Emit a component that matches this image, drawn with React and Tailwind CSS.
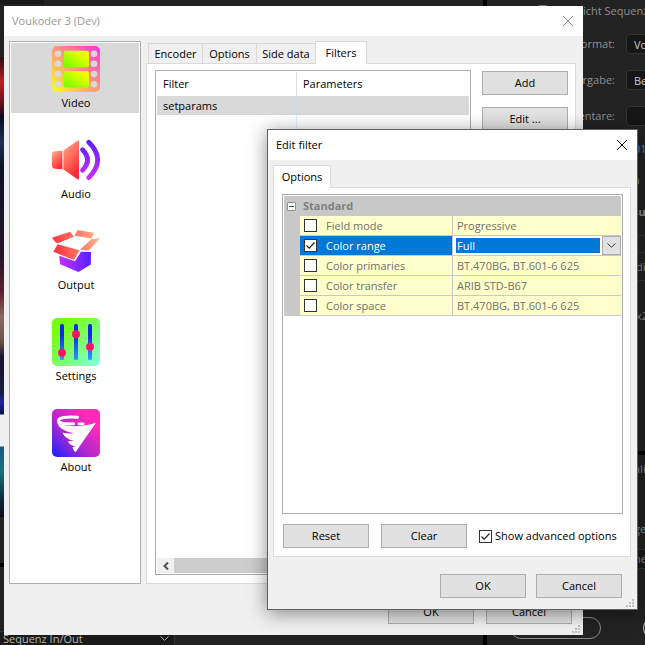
import { useState } from 'react';

const pages = [
  { name: 'Video', Icon: VideoIcon },
  { name: 'Audio', Icon: AudioIcon },
  { name: 'Output', Icon: OutputIcon },
  { name: 'Settings', Icon: SettingsIcon },
  { name: 'About', Icon: AboutIcon },
];

const filterProps = [
  { id: 'field_mode', label: 'Field mode', value: 'Progressive' },
  { id: 'range', label: 'Color range', value: 'Full' },
  { id: 'primaries', label: 'Color primaries', value: 'BT.470BG, BT.601-6 625' },
  { id: 'trc', label: 'Color transfer', value: 'ARIB STD-B67' },
  { id: 'space', label: 'Color space', value: 'BT.470BG, BT.601-6 625' },
];

function VideoIcon() {
  return (
    <svg viewBox="0 -1 48 48" className="size-12">
      <defs>
        <linearGradient id="film" x1="0" y1="1" x2="1" y2="0">
          <stop offset="0" stopColor="#f6ff1e" />
          <stop offset="0.5" stopColor="#ff9a76" />
          <stop offset="1" stopColor="#ff2ee6" />
        </linearGradient>
        <linearGradient id="frame" x1="0" y1="1" x2="1" y2="0">
          <stop offset="0" stopColor="#6dff00" />
          <stop offset="0.8" stopColor="#f0ff00" />
        </linearGradient>
      </defs>
      <rect width="48" height="46" rx="5" fill="url(#film)" />
      {[7.7, 17.7, 28, 38.3].map((y) => (
        <g key={y} fill="#d9d9d9">
          <circle cx="6" cy={y} r="3.3" />
          <circle cx="42" cy={y} r="3.3" />
        </g>
      ))}
      <rect x="11.7" y="4.7" width="25.3" height="16.5" rx="2" fill="url(#frame)" />
      <rect x="11.7" y="25" width="25.3" height="16.5" rx="2" fill="url(#frame)" />
    </svg>
  );
}

function AudioIcon() {
  return (
    <svg viewBox="0 -1 48 48" className="size-12">
      <defs>
        <linearGradient id="horn" x1="0" y1="0" x2="0.5" y2="1">
          <stop offset="0" stopColor="#ffb28a" />
          <stop offset="1" stopColor="#ff2a36" />
        </linearGradient>
        <linearGradient id="wave" gradientUnits="userSpaceOnUse" x1="0" y1="4" x2="0" y2="42">
          <stop offset="0" stopColor="#5a1fff" />
          <stop offset="1" stopColor="#cc30ff" />
        </linearGradient>
      </defs>
      <path d="M3 14.3 L10.4 13.8 V32.2 L3 31.7 Q0 31.4 0 28.5 V17.5 Q0 14.6 3 14.3Z" fill="url(#horn)" />
      <path d="M11.4 13.5 L25.5 3.8 Q27 3 27 4.8 V41.2 Q27 43 25.5 42.2 L11.4 32.5Z" fill="url(#horn)" />
      <path d="M30.5 12.8 Q40.5 23 30.5 33.2" fill="none" stroke="url(#wave)" strokeWidth="4.8" strokeLinecap="round" />
      <path d="M36.8 5.2 Q54.5 22.8 36.8 40.6" fill="none" stroke="url(#wave)" strokeWidth="4.8" strokeLinecap="round" />
    </svg>
  );
}

function OutputIcon() {
  return (
    <svg viewBox="0 -1 48 48" className="size-12">
      <defs>
        <linearGradient id="flap" gradientUnits="userSpaceOnUse" x1="0" y1="20" x2="46" y2="10">
          <stop offset="0" stopColor="#ff2c3a" />
          <stop offset="1" stopColor="#ffb28c" />
        </linearGradient>
        <linearGradient id="box" x1="0" y1="0" x2="1" y2="0">
          <stop offset="0" stopColor="#c431ff" />
          <stop offset="1" stopColor="#5620ff" />
        </linearGradient>
      </defs>
      <path d="M0 9.7 L18 3.7 L22 8.5 L6 15.2 L3.5 14.2Z" fill="url(#flap)" />
      <path d="M25.5 2 L42 4.7 L39.6 10.6 L22.5 7.8Z" fill="url(#flap)" />
      <path d="M39.7 10.9 L48 10.3 L36.5 22.7 L28 21.5Z" fill="url(#flap)" />
      <path d="M5.7 16.2 L27.6 22.3 L22 32 L1.3 23.8Z" fill="url(#flap)" />
      <path d="M7.2 27.7 L23 33.2 L29 23.8 L39 24 L38.8 36.5 L26.5 44 L8 36.3Z" fill="url(#box)" />
    </svg>
  );
}

function SettingsIcon() {
  return (
    <svg viewBox="0 0 48 48" className="size-12">
      <defs>
        <linearGradient id="board" x1="0" y1="0" x2="1" y2="1">
          <stop offset="0.2" stopColor="#77ff10" />
          <stop offset="1" stopColor="#86ffe4" />
        </linearGradient>
        <linearGradient id="slot" x1="0" y1="0" x2="0" y2="1">
          <stop offset="0.3" stopColor="#0a2be0" />
          <stop offset="1" stopColor="#2e9bff" />
        </linearGradient>
      </defs>
      <rect width="48" height="48" rx="5" fill="url(#board)" />
      {[[10, 34.8], [24, 16.2], [38, 28.7]].map(([x, y]) => (
        <g key={x}>
          <rect x={x - 2} y="6" width="4" height="36" rx="1.5" fill="url(#slot)" />
          <circle cx={x} cy={y} r="4" fill="#ff1266" />
        </g>
      ))}
    </svg>
  );
}

function AboutIcon() {
  return (
    <svg viewBox="0 0 48 48" className="size-12">
      <defs>
        <linearGradient id="sky" x1="0" y1="1" x2="0.8" y2="0.2">
          <stop offset="0" stopColor="#1722ff" />
          <stop offset="0.5" stopColor="#b026cf" />
          <stop offset="1" stopColor="#ff2bb6" />
        </linearGradient>
      </defs>
      <rect width="48" height="48" rx="5" fill="url(#sky)" />
      <path d="M25.5 8.3 C14 7 6.5 9 6.5 11.5 C6.5 14.5 14 15.3 21.5 14.8" fill="none" stroke="#fff" strokeWidth="3" strokeLinecap="round" />
      <path d="M27 14.8 H31" stroke="#fff" strokeWidth="2.8" strokeLinecap="round" />
      <path
        d="M5 12.5 C9 18.5 30 18.5 44 13.7 L23.5 43.3 C22 42 21 40.5 20.5 38.3 L24 37.6 C20 37 17 35 16 32.2 L22.5 32 C17 31 12 27.5 10.5 23.4 Q15 25 22 24.3 C12 22 6 19 5 12.5Z"
        fill="#fff"
      />
    </svg>
  );
}

function CloseButton({ className }) {
  return (
    <button aria-label="Close" className={className}>
      <svg viewBox="0 0 12 12" className="size-3" fill="none" stroke="currentColor">
        <path d="M1 1 L11 11 M11 1 L1 11" />
      </svg>
    </button>
  );
}

function PushButton({ children }) {
  return (
    <button className="h-6 w-[86px] shrink-0 border border-[#adadad] bg-[#e1e1e1] text-center">{children}</button>
  );
}

function CheckBox({ id, checked, onChange }) {
  return (
    <span className="relative block size-[13px] shrink-0">
      <input
        id={id}
        type="checkbox"
        checked={checked}
        onChange={onChange}
        className="peer block size-[13px] appearance-none border border-[#333] bg-white"
      />
      <svg viewBox="0 0 13 13" className="pointer-events-none absolute inset-0 hidden peer-checked:block" fill="none" stroke="#222" strokeWidth="1.2">
        <path d="M2.5 6.5 L5.2 9.2 L10.5 3.5" />
      </svg>
    </span>
  );
}

function SizeGrip() {
  return (
    <svg viewBox="0 0 9 9" className="absolute right-[2px] bottom-[1px] size-[9px]" fill="#bfbfbf">
      <path d="M6 0h2v2h-2z M3 3h2v2h-2z M6 3h2v2h-2z M0 6h2v2h-2z M3 6h2v2h-2z M6 6h2v2h-2z" />
    </svg>
  );
}

// Export dialog of the host application, mostly hidden by the two windows
function HostApp() {
  return (
    <div className="flex min-h-screen bg-[#222] text-[#8f8f8f]">
      <div className="flex w-[483px] shrink-0 flex-col">
        <div className="h-[57px] bg-[#222]">
          <div className="h-1 w-11 bg-[#191919]" />
        </div>
        <div className="h-[460px] w-1 bg-[linear-gradient(#2a0a12,#c01f24_25px,#5a1018_48px,#0a0a20_60px,#1c3054_85px,#0d1226_110px,#241428_200px,#5a2030_235px,#8a6a60_260px,#6a5048_285px,#141430_300px,#1a1a3a_335px,#1c24a8_345px,#10104a_357px,#f0f0f0_358px,#f0f0f0_389px,#1a5a80_390px,#17707c_415px,#0d3040_440px,#120a18)]" />
        <div className="mt-[46px] h-1 bg-black" />
        <div className="mt-auto flex h-[14px] items-center border-t border-[#333] bg-[#1a1a1a] pl-[3px] text-[#b4b4b4]">
          <span className="w-[157px]">Sequenz In/Out</span>
          <svg viewBox="0 0 9 5" className="mr-[5px] h-[5px] w-[9px]" fill="none" stroke="currentColor">
            <path d="M0.5 0.5 L4.5 4.2 L8.5 0.5" />
          </svg>
          <div className="h-full flex-1 border-l border-[#333] bg-[#222]" />
        </div>
      </div>
      <div className="w-1 shrink-0 bg-black" />
      <div className="flex min-w-0 flex-1 flex-col overflow-hidden whitespace-nowrap">
        <div className="flex h-[26px] items-center gap-2 pb-1 pl-[49px]">
          <input type="checkbox" aria-label="Entspricht Sequenzeinstellungen" className="size-[13px] shrink-0 appearance-none rounded-sm border border-[#777]" />
          <span className="pl-[26px]">icht Sequenz</span>
        </div>
        <HostRow label="Format:" value="Voukoder" />
        <HostRow label="Vorgabe:" value="Benutzer" />
        <HostRow label="Kommentare:" value="" />
        <div className="flex h-[30px] items-center pl-[147px] text-[#2d8ceb]">01</div>
        <div className="flex h-8 items-center pl-[146px]">n</div>
        <div className="flex h-[31px] items-center pl-[146px] font-bold">su</div>
        <div className="mt-2 h-[18px] border-y border-[#333]" />
        <div className="flex h-7 items-center border-b border-[#333] pl-[149px]">di</div>
        <div className="mt-[25px] flex h-5 items-center pl-[149px]">x2</div>
        <div className="mt-[125px] h-1 shrink-0 bg-black" />
        <div className="mt-1 flex h-5 items-center pl-[147px]">ali</div>
        <div className="mt-10 flex h-5 items-center pl-[147px]">ge</div>
        <div className="mt-[10px] flex h-5 items-center border-y border-[#333] bg-[#1a1a1a] pl-[147px]">ne</div>
        <div className="mt-auto flex items-center gap-[42px] pb-[6px] pl-[23px]">
          <button className="h-[22px] w-[91px] shrink-0 rounded-full border border-[#8a8a8a] pl-10 text-center">...</button>
          <button aria-label="Export" className="h-[22px] w-[91px] shrink-0 rounded-full border border-[#c8c8c8]" />
        </div>
      </div>
    </div>
  );
}

function HostRow({ label, value }) {
  return (
    <label className="flex h-9 shrink-0 items-center gap-[11px]">
      <span className="w-32 shrink-0 text-right">{label}</span>
      <input defaultValue={value} className="h-5 w-60 shrink-0 rounded-sm border border-[#333] bg-[#161616] pl-[7px] text-[#c8c8c8]" />
    </label>
  );
}

function MainWindow() {
  const [page, setPage] = useState('Video');

  return (
    <section className="absolute top-[6px] left-1 flex h-[629px] w-[579px] flex-col bg-[#f0f0f0]">
      <header className="flex h-[30px] shrink-0 items-center justify-between bg-white pr-[9px] pl-2 text-[#999]">
        <h1>Voukoder 3 (Dev)</h1>
        <CloseButton className="text-[#888]" />
      </header>

      <div className="flex h-[548px] gap-[5px] pt-[5px] pr-[7px] pl-[5px]">
        <nav className="flex w-[132px] shrink-0 flex-col gap-[21px] border border-[#abadb3] bg-white p-px">
          {pages.map(({ name, Icon }) => (
            <button
              key={name}
              onClick={() => setPage(name)}
              className={`flex h-[70px] shrink-0 flex-col items-center gap-[2px] pt-[2px] pl-[2px] ${page === name ? 'bg-[#d9d9d9]' : ''}`}
            >
              <Icon />
              {name}
            </button>
          ))}
        </nav>

        <div className="flex min-w-0 flex-1 flex-col">
          <div role="tablist" className="z-10 -mb-px flex h-[23px] shrink-0 items-end pl-[2px]">
            <button role="tab" className="h-[21px] w-[55px] border border-[#d9d9d9]">Encoder</button>
            <button role="tab" className="h-[21px] w-[54px] border border-l-0 border-[#d9d9d9]">Options</button>
            <button role="tab" className="h-[21px] w-[58px] border border-x-0 border-[#d9d9d9]">Side data</button>
            <button role="tab" aria-selected="true" className="h-[23px] w-[52px] border border-b-0 border-[#d9d9d9] bg-white">Filters</button>
          </div>
          <div className="flex flex-1 gap-[11px] border border-[#dcdcdc] bg-white pt-[6px] pr-[7px] pb-2 pl-2">
            <div className="flex min-w-0 flex-1 flex-col justify-between border border-[#abadb3] p-px">
              <table className="w-full table-fixed border-separate border-spacing-0 text-left">
                <thead>
                  <tr className="h-6">
                    <th className="w-[140px] border-r border-[#e0e0e0] p-0 pl-[6px] font-normal">Filter</th>
                    <th className="p-0 pl-[6px] font-normal">Parameters</th>
                  </tr>
                </thead>
                <tbody>
                  <tr className="h-[19px] bg-[#d9d9d9]">
                    <td className="border-r border-[#cfdce8] p-0 pl-[6px]">setparams</td>
                    <td />
                  </tr>
                  <tr className="h-[440px]">
                    <td className="border-r border-[#e4f0fb]" />
                    <td />
                  </tr>
                </tbody>
              </table>
              <div className="flex h-[15px] bg-[#cdcdcd]">
                <button aria-label="Scroll left" className="flex w-[17px] items-center justify-center bg-[#f0f0f0]">
                  <svg viewBox="0 0 6 8" className="h-2 w-[6px]" fill="none" stroke="#505050" strokeWidth="2">
                    <path d="M5 0.5 L1.5 4 L5 7.5" />
                  </svg>
                </button>
              </div>
            </div>
            <div className="flex flex-col gap-3 pt-px">
              <PushButton>Add</PushButton>
              <PushButton>Edit ...</PushButton>
            </div>
          </div>
        </div>
      </div>

      <footer className="mt-auto flex justify-end gap-3 pr-[11px] pb-[11px]">
        <PushButton>OK</PushButton>
        <PushButton>Cancel</PushButton>
      </footer>
      <SizeGrip />
    </section>
  );
}

function EditFilterDialog() {
  const [checked, setChecked] = useState({ range: true });
  const [advanced, setAdvanced] = useState(true);

  return (
    <section className="absolute top-[129px] left-[267px] flex h-[481px] w-[371px] flex-col border border-[#5f6062] bg-[#f0f0f0] shadow-[0_3px_18px_rgba(0,0,0,0.45)]">
      <header className="flex h-[30px] shrink-0 items-center justify-between bg-white pr-[9px] pl-2">
        <h2>Edit filter</h2>
        <CloseButton />
      </header>

      <div className="flex flex-1 flex-col pt-[5px] pr-[6px] pl-[5px]">
        <div role="tablist" className="z-10 -mb-px flex h-[23px]">
          <button role="tab" aria-selected="true" className="w-[58px] border border-b-0 border-[#dcdcdc] bg-white">Options</button>
        </div>
        <div className="flex flex-col gap-[10px] border border-[#dcdcdc] bg-white pt-[6px] pr-[7px] pb-2 pl-2">
          <div className="h-80 border border-[#abadb3] p-px">
            <table className="w-full table-fixed border-separate border-spacing-0 text-left">
              <thead>
                <tr className="h-5 bg-[#c8c8c8] text-[#808080]">
                  <th className="w-4 p-0 pl-[3px]">
                    <button aria-label="Collapse" className="block size-[9px] rounded-[1px] border border-[#919191] bg-white px-px">
                      <span className="block h-px bg-[#2b4cae]" />
                    </button>
                  </th>
                  <th className="w-[153px] p-0 pl-[3px]">Standard</th>
                  <th />
                </tr>
              </thead>
              <tbody>
                {filterProps.map(({ id, label, value }) => {
                  const active = id === 'range';
                  return (
                    <tr key={id} className={`h-5 ${active ? 'bg-[#0078d7] text-white' : 'bg-[#ffffcc] text-[#707070]'}`}>
                      <td className="bg-[#c8c8c8]" />
                      <td className="border-r border-b border-[#c8c8c8] p-0 pl-1">
                        <div className="flex items-center gap-[9px]">
                          <CheckBox
                            id={id}
                            checked={!!checked[id]}
                            onChange={() => setChecked({ ...checked, [id]: !checked[id] })}
                          />
                          <label htmlFor={id}>{label}</label>
                        </div>
                      </td>
                      <td className="border-b border-[#c8c8c8] p-0">
                        {active ? (
                          <div className="flex h-[19px] items-center gap-[2px] bg-white pl-[3px]">
                            <select aria-label={label} className="h-[15px] min-w-0 flex-1 appearance-none bg-[#0078d7] pl-px leading-[15px]">
                              <option>{value}</option>
                            </select>
                            <button aria-label="Open list" className="flex h-[19px] w-[19px] items-center justify-center border border-[#adadad] bg-[#e1e1e1] text-[#333]">
                              <svg viewBox="0 0 9 5" className="h-[5px] w-[9px]" fill="none" stroke="currentColor">
                                <path d="M0.5 0.5 L4.5 4.2 L8.5 0.5" />
                              </svg>
                            </button>
                          </div>
                        ) : (
                          <span className="pl-1">{value}</span>
                        )}
                      </td>
                    </tr>
                  );
                })}
              </tbody>
            </table>
          </div>
          <div className="flex items-center gap-3 pl-px">
            <PushButton>Reset</PushButton>
            <PushButton>Clear</PushButton>
            <div className="flex items-center gap-[3px] whitespace-nowrap">
              <CheckBox id="advanced" checked={advanced} onChange={() => setAdvanced(!advanced)} />
              <label htmlFor="advanced">Show advanced options</label>
            </div>
          </div>
        </div>
      </div>

      <footer className="flex justify-end gap-[10px] pr-[15px] pb-[11px]">
        <PushButton>OK</PushButton>
        <PushButton>Cancel</PushButton>
      </footer>
      <SizeGrip />
    </section>
  );
}

export default function App() {
  return (
    <main className="relative min-h-screen overflow-hidden font-['Open_Sans','Noto_Sans',sans-serif] text-[11px] leading-4 text-black">
      <HostApp />
      <MainWindow />
      <EditFilterDialog />
    </main>
  );
}
